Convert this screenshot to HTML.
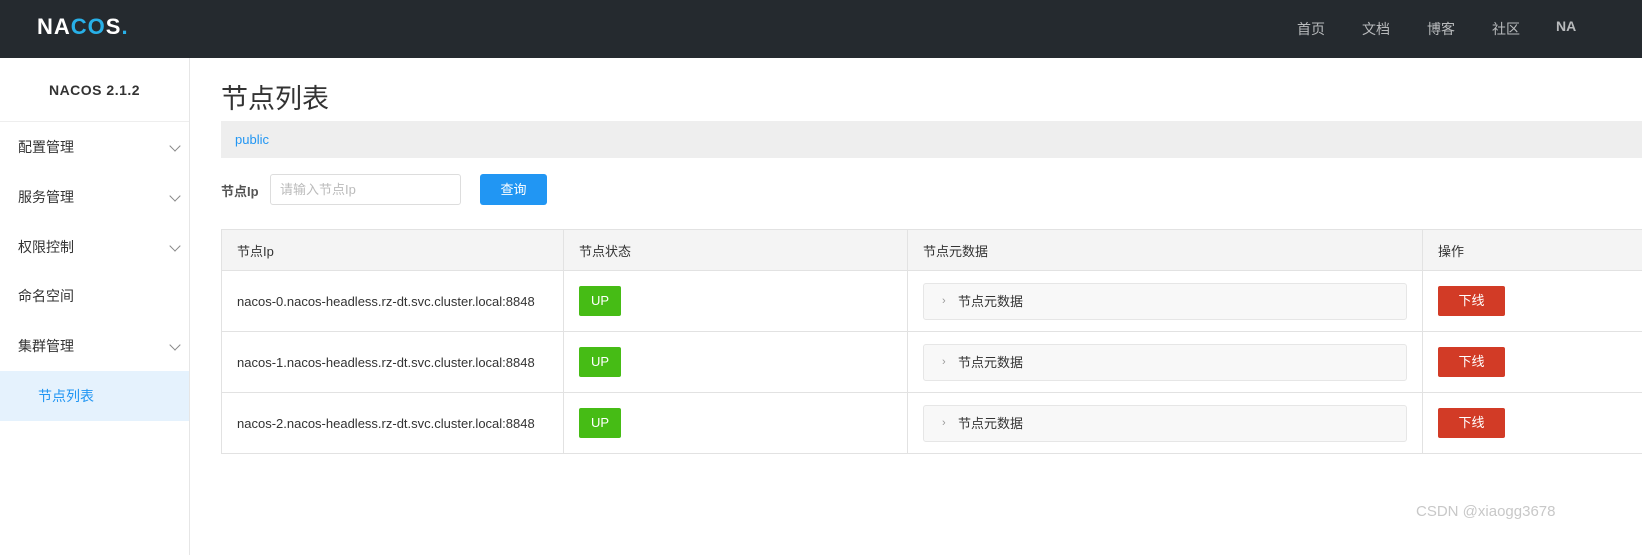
<!DOCTYPE html>
<html><head><meta charset="utf-8"><style>
*{box-sizing:border-box;margin:0;padding:0}
body{width:1642px;height:555px;overflow:hidden;background:#fff;font-family:"Liberation Sans","Noto Sans CJK SC",sans-serif;color:#333;position:relative;font-size:13px}
.hdr{position:absolute;left:0;top:0;width:1642px;height:58px;background:#252a2f}
.logo{position:absolute;left:37px;top:14px;color:#fff;font-size:22px;font-weight:bold;letter-spacing:1px}
.nav{position:absolute;top:19px;color:#b8babc;font-size:14px}
.side{position:absolute;left:0;top:58px;width:190px;height:497px;border-right:1px solid #e6e6e6}
.ver{height:64px;border-bottom:1px solid #eee;text-align:center;line-height:64px;font-weight:bold;font-size:14px;color:#333;letter-spacing:.5px}
.it{position:absolute;left:0;width:189px;height:50px;line-height:50px;padding-left:18px;font-size:14px;color:#333}
.chev{position:absolute;right:10px;top:20px;width:8px;height:8px;border-right:1px solid #888;border-bottom:1px solid #888;transform:rotate(45deg)}
.abs{position:absolute}
table{position:absolute;left:221px;top:229px;border-collapse:collapse;font-size:13px;table-layout:fixed;width:1500px}
td{border:1px solid #e2e2e2;padding:0 15px;vertical-align:middle;white-space:nowrap}
tr.h td{background:#f4f4f4;height:41px}
tr.r td{height:61px}
.up{display:inline-block;width:42px;height:30px;background:#46bc15;color:#fff;text-align:center;line-height:30px;border-radius:2px}
.meta{height:37px;background:#f8f8f8;border:1px solid #e6e6e6;border-radius:3px;line-height:35px;padding-left:34px;position:relative}
.meta:before{content:"›";position:absolute;left:18px;color:#999;font-size:11px}
.dn{display:inline-block;width:67px;height:30px;background:#d23b26;color:#fff;text-align:center;line-height:30px;border-radius:2px}
</style></head><body>
<div class="hdr">
<div class="logo">NA<span style="color:#28b0e8">CO</span>S<span style="color:#28b0e8">.</span></div>
<div class="nav" style="left:1297px">首页</div>
<div class="nav" style="left:1362px">文档</div>
<div class="nav" style="left:1427px">博客</div>
<div class="nav" style="left:1492px">社区</div>
<div class="nav" style="left:1556px;font-weight:bold;top:18px">NA</div>
</div>
<div class="side">
<div class="ver">NACOS 2.1.2</div>
<div class="it" style="top:64px">配置管理<i class="chev"></i></div>
<div class="it" style="top:114px">服务管理<i class="chev"></i></div>
<div class="it" style="top:164px">权限控制<i class="chev"></i></div>
<div class="it" style="top:213px">命名空间</div>
<div class="it" style="top:263px">集群管理<i class="chev"></i></div>
<div class="it" style="top:313px;background:#e5f2fd;color:#2196f3;padding-left:38px">节点列表</div>
</div>
<div class="abs" style="left:221px;top:77px;font-size:27px;color:#333">节点列表</div>
<div class="abs" style="left:221px;top:121px;width:1421px;height:37px;background:#eee;color:#2196f3;line-height:37px;padding-left:14px;font-size:13px">public</div>
<div class="abs" style="left:221px;top:181px;font-weight:bold;font-size:13px;color:#555">节点Ip</div>
<div class="abs" style="left:270px;top:174px;width:191px;height:31px;border:1px solid #ddd;border-radius:3px;color:#bbb;padding-left:9px;line-height:29px">请输入节点Ip</div>
<div class="abs" style="left:480px;top:174px;width:67px;height:31px;background:#2196f3;border-radius:3px;color:#fff;text-align:center;line-height:31px">查询</div>
<table>
<colgroup><col style="width:342px"><col style="width:344px"><col style="width:515px"><col style="width:299px"></colgroup>
<tr class="h"><td>节点Ip</td><td>节点状态</td><td>节点元数据</td><td>操作</td></tr>
<tr class="r"><td>nacos-0.nacos-headless.rz-dt.svc.cluster.local:8848</td><td><span class="up">UP</span></td><td><div class="meta">节点元数据</div></td><td><span class="dn">下线</span></td></tr>
<tr class="r"><td>nacos-1.nacos-headless.rz-dt.svc.cluster.local:8848</td><td><span class="up">UP</span></td><td><div class="meta">节点元数据</div></td><td><span class="dn">下线</span></td></tr>
<tr class="r"><td>nacos-2.nacos-headless.rz-dt.svc.cluster.local:8848</td><td><span class="up">UP</span></td><td><div class="meta">节点元数据</div></td><td><span class="dn">下线</span></td></tr>
</table>
<div class="abs" style="left:1416px;top:503px;color:#c8c8c8;font-size:15px">CSDN @xiaogg3678</div>
</body></html>
